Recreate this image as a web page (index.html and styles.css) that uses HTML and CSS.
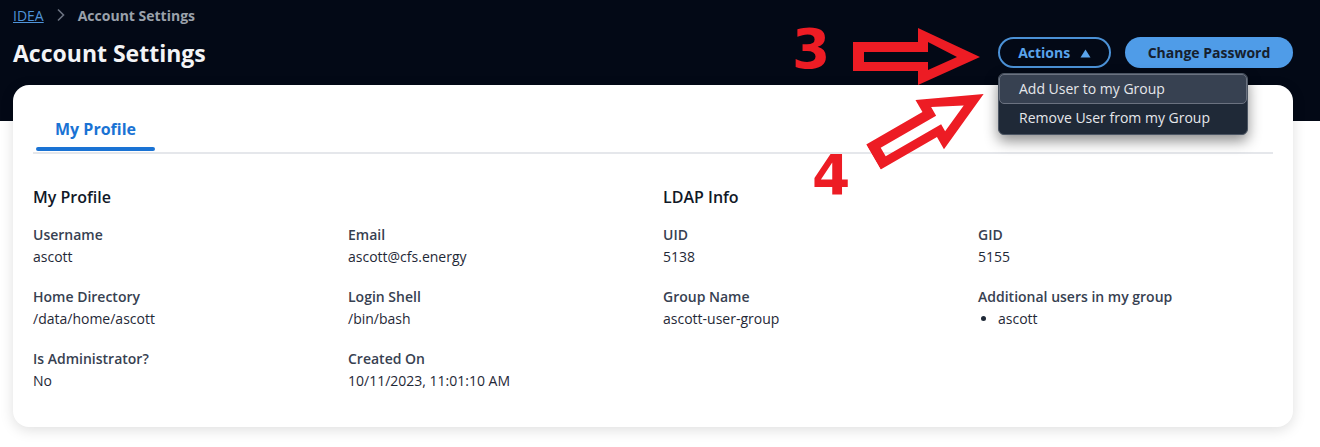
FILE: index.html
```html
<!DOCTYPE html>
<html lang="en">
<head>
<meta charset="utf-8">
<title>Account Settings</title>
<link rel="stylesheet" href="styles.css">
</head>
<body>
<header class="top">
  <nav class="crumbs">
    <a class="crumb-link" href="#">IDEA</a>
    <svg class="crumb-sep" width="10" height="14" viewBox="0 0 10 14"><path d="M2 1.5 L7.5 7 L2 12.5" fill="none" stroke="#6b7280" stroke-width="1.6"/></svg>
    <span class="crumb-current">Account Settings</span>
  </nav>
  <div class="title-row">
    <h1 class="page-title">Account Settings</h1>
    <div class="actions">
      <div class="dd">
        <button class="btn btn-outline">Actions <svg class="caret" width="11" height="9" viewBox="0 0 11 9"><path d="M5.5 0.5 L10.5 8.5 H0.5 Z" fill="#5aa4ec"/></svg></button>
        <ul class="menu">
          <li class="menu-item active">Add User to my Group</li>
          <li class="menu-item">Remove User from my Group</li>
        </ul>
      </div>
      <button class="btn btn-primary">Change Password</button>
    </div>
  </div>
</header>

<main class="card">
  <div class="tabs">
    <div class="tab">My Profile</div>
  </div>
  <div class="sections">
    <section class="sec">
      <h2 class="sec-title">My Profile</h2>
      <div class="grid">
        <div class="field"><div class="lbl">Username</div><div class="val">ascott</div></div>
        <div class="field"><div class="lbl">Email</div><div class="val">ascott@cfs.energy</div></div>
        <div class="field"><div class="lbl">Home Directory</div><div class="val">/data/home/ascott</div></div>
        <div class="field"><div class="lbl">Login Shell</div><div class="val">/bin/bash</div></div>
        <div class="field"><div class="lbl">Is Administrator?</div><div class="val">No</div></div>
        <div class="field"><div class="lbl">Created On</div><div class="val">10/11/2023, 11:01:10 AM</div></div>
      </div>
    </section>
    <section class="sec">
      <h2 class="sec-title">LDAP Info</h2>
      <div class="grid">
        <div class="field"><div class="lbl">UID</div><div class="val">5138</div></div>
        <div class="field"><div class="lbl">GID</div><div class="val">5155</div></div>
        <div class="field"><div class="lbl">Group Name</div><div class="val">ascott-user-group</div></div>
        <div class="field"><div class="lbl">Additional users in my group</div><ul class="val users"><li>ascott</li></ul></div>
      </div>
    </section>
  </div>
</main>

<div class="anno anno-3">3</div>
<div class="anno anno-4">4</div>
<svg class="arrow arrow-3" width="130" height="60" viewBox="0 0 130 60">
  <path fill="#ed1c24" fill-rule="evenodd" d="M0 14 H65 V0 L127 29 L65 57 V43 H0 Z M11 24 V34 H75 V42 L104 29 L75 14 V24 Z"/>
</svg>
<svg class="arrow arrow-4" width="130" height="60" viewBox="0 0 130 60">
  <path fill="#ed1c24" fill-rule="evenodd" d="M0 14 H65 V0 L127 29 L65 57 V43 H0 Z M11 24 V34 H75 V42 L104 29 L75 14 V24 Z"/>
</svg>
</body>
</html>
```

FILE: styles.css
```css
* { box-sizing: border-box; }
html, body { margin: 0; padding: 0; }
body {
  font-family: "Open Sans", "Noto Sans", sans-serif;
  background: #ffffff;
  width: 1320px;
  height: 447px;
  overflow: hidden;
  position: relative;
}
.top {
  background: #030916;
  height: 121px;
  padding: 4px 27px 0 13px;
}
.crumbs {
  display: flex;
  align-items: center;
  gap: 13px;
  height: 22px;
  font-size: 14px;
}
.crumb-link { color: #4f93d8; text-decoration: underline; }
.crumb-sep { margin: 0 -1px; }
.crumb-current { color: #9aa1ab; font-weight: 700; }
.title-row {
  display: flex;
  align-items: center;
  justify-content: space-between;
  margin-top: 11px;
  height: 31px;
}
.page-title {
  margin: 0;
  color: #f3f4f6;
  font-size: 23px;
  font-weight: 700;
}
.actions { display: flex; gap: 14px; align-items: center; }
.dd { position: relative; }
.btn {
  font-family: "Open Sans", sans-serif;
  font-size: 14px;
  font-weight: 700;
  height: 31px;
  border-radius: 16px;
  cursor: pointer;
}
.btn-outline {
  background: transparent;
  border: 2px solid #4b91d6;
  color: #5aa4ec;
  width: 113px;
  padding: 0;
}
.caret { margin-left: 6px; vertical-align: 0; }
.btn-primary {
  background: #4f9ce8;
  border: none;
  color: #16202e;
  width: 168px;
}
.menu {
  position: absolute;
  top: 36px;
  left: 0;
  width: 250px;
  margin: 0;
  padding: 0;
  list-style: none;
  background: #1f2937;
  border: 1px solid #4b5563;
  border-radius: 6px;
  box-shadow: 0 6px 14px rgba(0,0,0,0.45);
  z-index: 5;
}
.menu-item {
  height: 30px;
  line-height: 28px;
  padding-left: 20px;
  color: #e5e7eb;
  font-size: 14px;
}
.menu-item.active {
  background: #374151;
  border: 1px solid #6b7280;
  border-radius: 5px;
  padding-left: 19px;
}
.card {
  margin: -36px 27px 0 13px;
  background: #fff;
  border-radius: 16px;
  box-shadow: 0 3px 14px rgba(0,0,0,0.13);
  padding: 33px 20px 37px 20px;
  height: 342px;
}
.tabs {
  border-bottom: 2px solid #e5e7eb;
  display: flex;
  padding-left: 3px;
}
.tab {
  color: #1a73d4;
  font-weight: 700;
  font-size: 16px;
  line-height: 22px;
  padding: 0 0 12px;
  width: 119px;
  white-space: nowrap;
  text-align: center;
  position: relative;
}
.tab::after {
  content: "";
  position: absolute;
  left: 0; right: 0; bottom: 1px;
  height: 4px;
  border-radius: 2px;
  background: #1a73d4;
}
.sections {
  display: grid;
  grid-template-columns: 630px 1fr;
  margin-top: 31px;
}
.sec-title {
  margin: 0 0 16px;
  font-size: 16px;
  font-weight: 600;
  line-height: 24px;
  color: #111827;
}
.grid {
  display: grid;
  grid-template-columns: 315px 315px;
  row-gap: 20px;
}
.lbl {
  font-size: 14px;
  font-weight: 600;
  color: #374151;
  line-height: 20px;
}
.val {
  margin-top: 2px;
  font-size: 14px;
  color: #1f2937;
  line-height: 20px;
}
.users { margin: 2px 0 0; padding-left: 20px; }
.anno {
  position: absolute;
  font-family: "DejaVu Sans", sans-serif;
  font-weight: 700;
  font-size: 55px;
  line-height: 1;
  color: #ed1c24;
}
.anno-3 { left: 792px; top: 22px; }
.anno-4 { left: 812px; top: 148px; }
.arrow { position: absolute; }
.arrow-3 { left: 853px; top: 28px; }
.arrow-4 { left: 873px; top: 126px; transform-origin: 5px 29px; transform: rotate(-30deg); }
```
